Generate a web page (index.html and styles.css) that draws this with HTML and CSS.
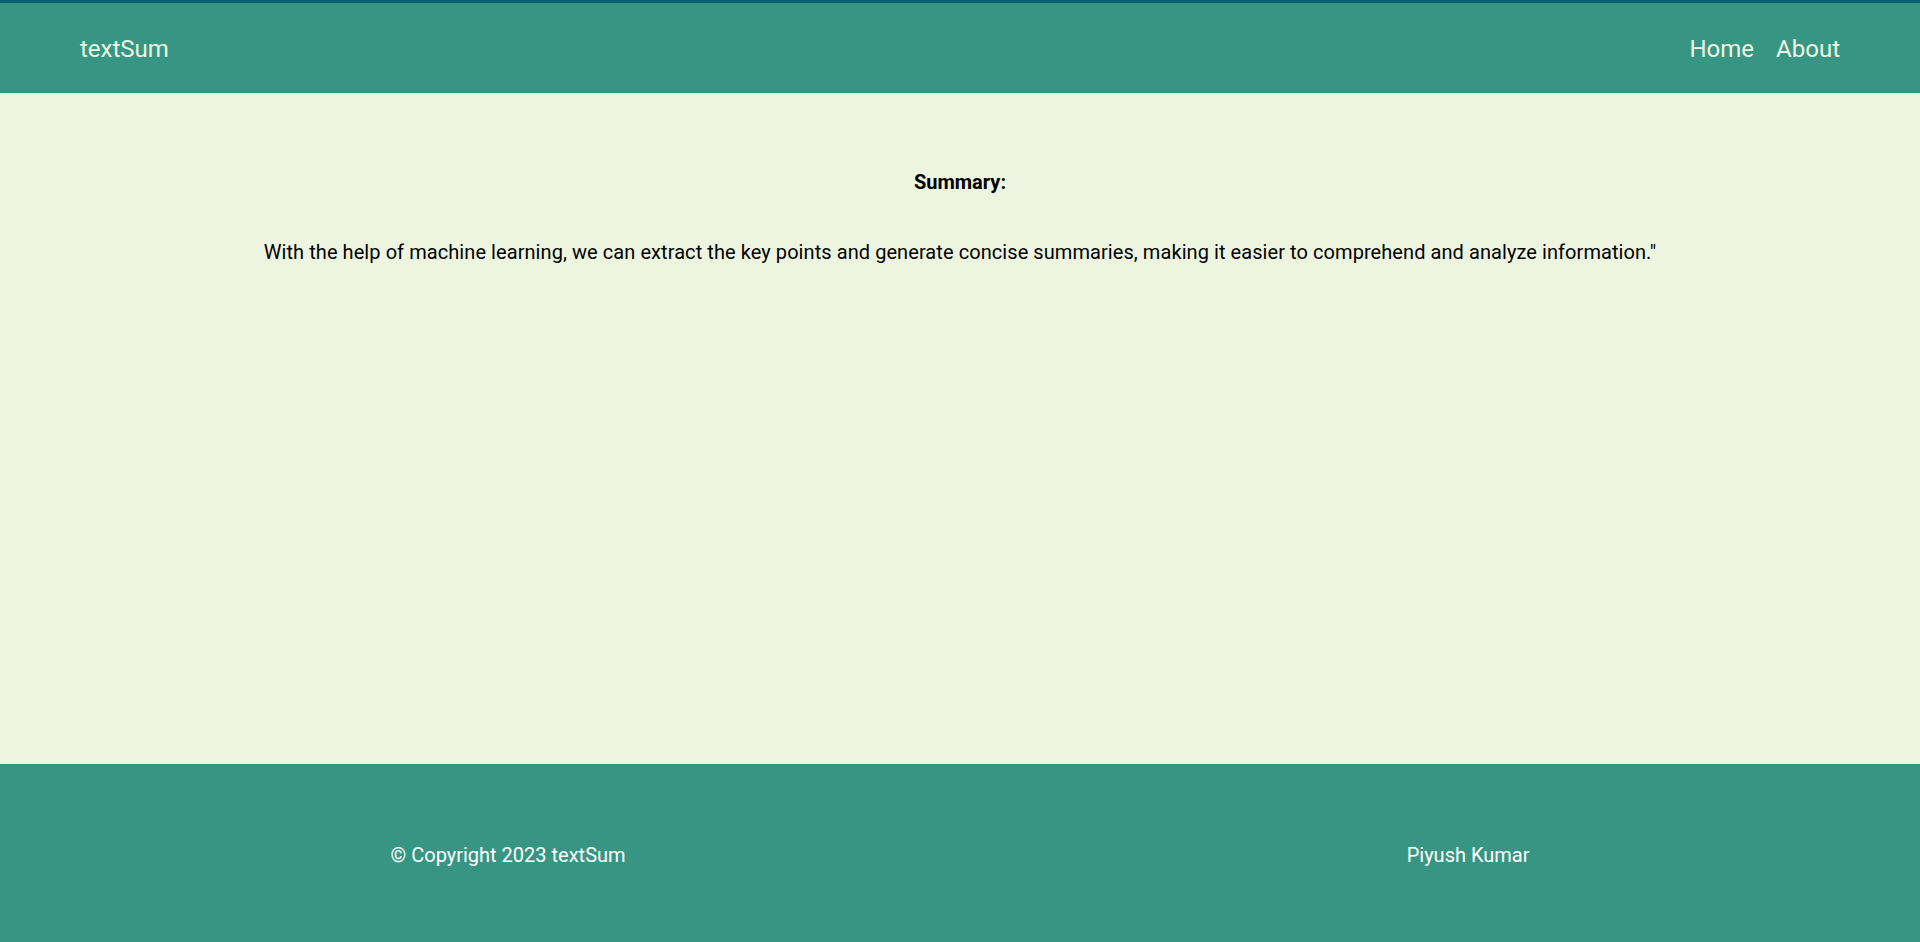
FILE: index.html
```html
<!DOCTYPE html>
<html lang="en">
<head>
<meta charset="utf-8">
<title>textSum</title>
<link rel="stylesheet" href="styles.css">
</head>
<body>
<header class="navbar">
  <a class="brand" href="#">textSum</a>
  <nav class="nav">
    <a href="#">Home</a>
    <a href="#">About</a>
  </nav>
</header>
<main class="content">
  <h3 class="title">Summary:</h3>
  <p class="summary">With the help of machine learning, we can extract the key points and generate concise summaries, making it easier to comprehend and analyze information."</p>
</main>
<footer class="footer">
  <span>&copy; Copyright 2023 textSum</span>
  <span>Piyush Kumar</span>
</footer>
</body>
</html>
```
FILE: styles.css
```css
html, body { margin: 0; padding: 0; height: 100%; }
body {
  font-family: Roboto, "Liberation Sans", sans-serif;
  background: #edf5e1;
  display: flex;
  flex-direction: column;
  min-height: 942px;
}
.navbar {
  background: #379683;
  border-top: 3px solid #05616e;
  height: 88px;
  padding: 2px 80px 0;
  display: flex;
  align-items: center;
  justify-content: space-between;
}
.navbar a { color: #edf5e1; text-decoration: none; }
.brand { font-size: 24px; }
.nav { display: flex; gap: 22px; }
.nav a { font-size: 24px; }
.content {
  flex: 1;
  text-align: center;
  color: #000;
}
.title {
  font-size: 20px;
  font-weight: 700;
  margin: 77px 0 0;
}
.summary {
  font-size: 20px;
  letter-spacing: 0.07px;
  margin: 46px 0 0;
}
.footer {
  background: #379683;
  height: 174px;
  padding-top: 4px;
  display: flex;
  align-items: center;
  justify-content: space-around;
  color: #fff;
  font-size: 20px;
}
```
